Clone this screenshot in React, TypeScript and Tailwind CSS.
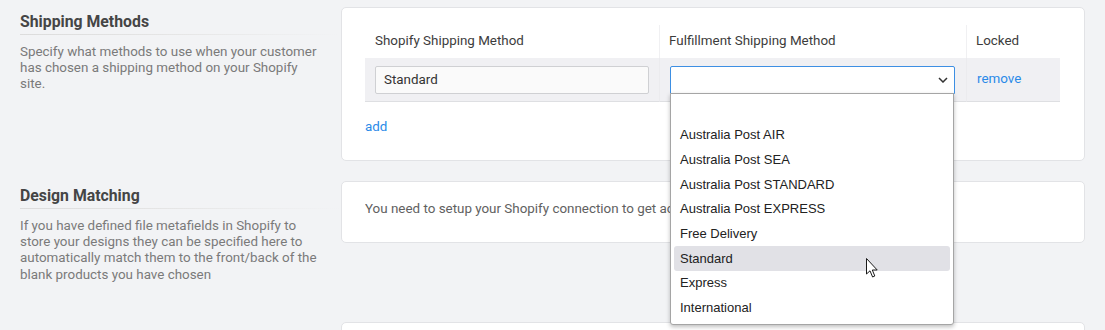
import React from "react";

const options = [
  "",
  "Australia Post AIR",
  "Australia Post SEA",
  "Australia Post STANDARD",
  "Australia Post EXPRESS",
  "Free Delivery",
  "Standard",
  "Express",
  "International",
];

function SideInfo({ title, children }: { title: string; children: React.ReactNode }) {
  return (
    <div className="w-[321px] shrink-0 pt-[5px] pr-[1px]">
      <h2 className="text-[15.8px] leading-[20px] font-bold text-[#454545]">{title}</h2>
      <div className="mt-[2px] h-px w-[320px] bg-gradient-to-r from-[#dcdcdc] via-[#e6e6e6] to-transparent" />
      <p className="mt-[9px] w-[300px] text-[13.4px] leading-[16.2px] text-[#7a7a7a]">{children}</p>
    </div>
  );
}

function Chevron() {
  return (
    <svg width="10" height="6" viewBox="0 0 10 6" className="text-[#333]">
      <path d="M1 1l4 4 4-4" fill="none" stroke="currentColor" strokeWidth="1.5" />
    </svg>
  );
}

function Cursor() {
  return (
    <svg width="14" height="21" viewBox="0 0 14 21" className="absolute left-[195px] top-[164px]">
      <path
        d="M0.5 0.5 L0.5 16 L4 12.8 L6.6 19 L8.8 18 L6.3 12 L11.2 12 Z"
        fill="#ffffff"
        stroke="#1a1a1a"
        strokeWidth="1"
        strokeLinejoin="round"
      />
    </svg>
  );
}

export default function App() {
  return (
    <div
      className="w-[1105px] h-[330px] overflow-hidden bg-[#f2f3f5] pl-[20px] pr-[20px] pt-[7px]"
      style={{ fontFamily: "Roboto, 'Liberation Sans', Arial, sans-serif" }}
    >
      {/* Shipping Methods */}
      <section className="flex">
        <SideInfo title="Shipping Methods">
          Specify what methods to use when your customer has chosen a shipping method on your Shopify site.
        </SideInfo>
        <div className="flex-1 bg-white border border-[#e2e3e6] rounded-[5px] pt-[17px] pb-[24px] px-[23px]">
          <div className="grid grid-cols-[294px_307px_94px] text-[13.4px] text-[#3c3c3c]">
            <div className="h-[33px] flex items-center pl-[10px]">Shopify Shipping Method</div>
            <div className="h-[33px] flex items-center pl-[9px] border-l border-[#f0f0f2]">Fulfillment Shipping Method</div>
            <div className="h-[33px] flex items-center pl-[9px] border-l border-[#f0f0f2]">Locked</div>

            <div className="h-[44px] bg-[#f0f0f3] border-b border-[#dedfe2] pt-[8px] pl-[10px] pr-[10px]">
              <div className="h-[28px] border border-[#cfd0d3] rounded-[2px] bg-[#fafafa] flex items-center pl-[8px] text-[13.4px] text-[#333]">
                Standard
              </div>
            </div>
            <div className="relative h-[44px] bg-[#f0f0f3] border-b border-[#dedfe2] border-l border-l-[#ebebee] pt-[8px] pl-[10px] pr-[11px]">
              <div className="h-[28px] border border-[#3d8fe3] rounded-t-[2px] bg-white flex items-center justify-end pr-[6px]">
                <Chevron />
              </div>
              {/* open list */}
              <div
                className="absolute left-[10px] top-[35px] w-[284px] z-10 bg-white border border-[#a5a5a5] rounded-b-[3px] shadow-[0_2px_4px_rgba(0,0,0,0.25)] py-[4px] px-[3px] text-[13px] text-[#222]"
                style={{ fontFamily: "'Liberation Sans', Arial, sans-serif" }}
              >
                {options.map((o, i) => (
                  <div
                    key={i}
                    className={
                      "h-[24.7px] flex items-center pl-[6px] rounded-[3px] " +
                      (o === "Standard" ? "bg-[#e1e1e6]" : "")
                    }
                  >
                    {o}
                  </div>
                ))}
                <Cursor />
              </div>
            </div>
            <div className="h-[44px] bg-[#f0f0f3] border-b border-[#dedfe2] border-l border-l-[#ebebee] pl-[10px] flex items-center">
              <a className="text-[13.4px] text-[#2a8ae8] cursor-pointer">remove</a>
            </div>
          </div>
          <div className="mt-[16px] h-[18px] flex items-center">
            <a className="text-[13.4px] text-[#2a8ae8] cursor-pointer">add</a>
          </div>
        </div>
      </section>

      {/* Design Matching */}
      <section className="flex mt-[20px] h-[121px]">
        <SideInfo title="Design Matching">
          If you have defined file metafields in Shopify to store your designs they can be specified here to automatically match them to the front/back of the blank products you have chosen
        </SideInfo>
        <div className="flex-1 self-start bg-white border border-[#e2e3e6] rounded-[5px] pt-[17px] pb-[23px] px-[23px]">
          <div className="h-[20px] flex items-center text-[13.4px] text-[#616161] overflow-hidden">
            You need to setup your Shopify connection to get access to your metafields.
          </div>
        </div>
      </section>

      {/* Next section */}
      <section className="flex mt-[20px]">
        <div className="w-[321px] shrink-0" />
        <div className="flex-1 h-[60px] bg-white border border-[#e2e3e6] rounded-[5px]" />
      </section>
    </div>
  );
}
